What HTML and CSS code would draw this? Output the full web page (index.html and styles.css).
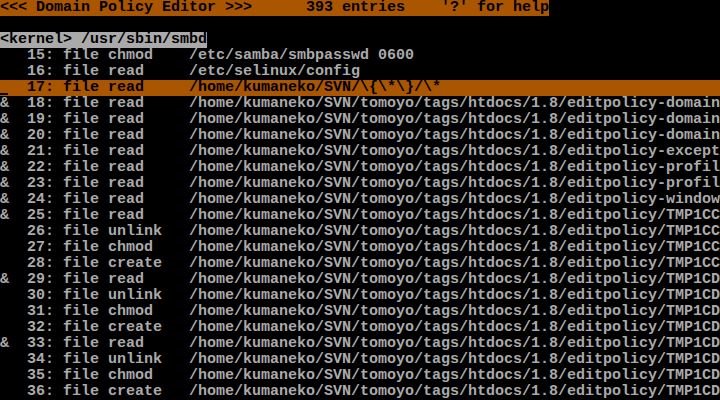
FILE: index.html
```html
<!DOCTYPE html>
<html>
<head>
<meta charset="utf-8">
<link rel="stylesheet" href="styles.css">
</head>
<body>
<div class="screen">
<div class="row"><span class="title">&lt;&lt;&lt; Domain Policy Editor &gt;&gt;&gt;      393 entries    '?' for help</span></div>
<div class="row"> </div>
<div class="row"><span class="domain">&lt;kernel&gt; /usr/sbin/smbd</span></div>
<div class="row">   15: file chmod    /etc/samba/smbpasswd 0600</div>
<div class="row">   16: file read     /etc/selinux/config</div>
<div class="row current"><span class="cursor"> </span>  17: file read     /home/kumaneko/SVN/\{\*\}/\*</div>
<div class="row">&amp;  18: file read     /home/kumaneko/SVN/tomoyo/tags/htdocs/1.8/editpolicy-domain</div>
<div class="row">&amp;  19: file read     /home/kumaneko/SVN/tomoyo/tags/htdocs/1.8/editpolicy-domain</div>
<div class="row">&amp;  20: file read     /home/kumaneko/SVN/tomoyo/tags/htdocs/1.8/editpolicy-domain</div>
<div class="row">&amp;  21: file read     /home/kumaneko/SVN/tomoyo/tags/htdocs/1.8/editpolicy-except</div>
<div class="row">&amp;  22: file read     /home/kumaneko/SVN/tomoyo/tags/htdocs/1.8/editpolicy-profil</div>
<div class="row">&amp;  23: file read     /home/kumaneko/SVN/tomoyo/tags/htdocs/1.8/editpolicy-profil</div>
<div class="row">&amp;  24: file read     /home/kumaneko/SVN/tomoyo/tags/htdocs/1.8/editpolicy-window</div>
<div class="row">&amp;  25: file read     /home/kumaneko/SVN/tomoyo/tags/htdocs/1.8/editpolicy/TMP1CC</div>
<div class="row">   26: file unlink   /home/kumaneko/SVN/tomoyo/tags/htdocs/1.8/editpolicy/TMP1CC</div>
<div class="row">   27: file chmod    /home/kumaneko/SVN/tomoyo/tags/htdocs/1.8/editpolicy/TMP1CC</div>
<div class="row">   28: file create   /home/kumaneko/SVN/tomoyo/tags/htdocs/1.8/editpolicy/TMP1CC</div>
<div class="row">&amp;  29: file read     /home/kumaneko/SVN/tomoyo/tags/htdocs/1.8/editpolicy/TMP1CD</div>
<div class="row">   30: file unlink   /home/kumaneko/SVN/tomoyo/tags/htdocs/1.8/editpolicy/TMP1CD</div>
<div class="row">   31: file chmod    /home/kumaneko/SVN/tomoyo/tags/htdocs/1.8/editpolicy/TMP1CD</div>
<div class="row">   32: file create   /home/kumaneko/SVN/tomoyo/tags/htdocs/1.8/editpolicy/TMP1CD</div>
<div class="row">&amp;  33: file read     /home/kumaneko/SVN/tomoyo/tags/htdocs/1.8/editpolicy/TMP1CD</div>
<div class="row">   34: file unlink   /home/kumaneko/SVN/tomoyo/tags/htdocs/1.8/editpolicy/TMP1CD</div>
<div class="row">   35: file chmod    /home/kumaneko/SVN/tomoyo/tags/htdocs/1.8/editpolicy/TMP1CD</div>
<div class="row">   36: file create   /home/kumaneko/SVN/tomoyo/tags/htdocs/1.8/editpolicy/TMP1CD</div>
</div>
</body>
</html>
```
FILE: styles.css
```css
html, body {
  margin: 0;
  padding: 0;
  background: #000;
}
.screen {
  width: 720px;
  height: 400px;
  overflow: hidden;
  background: #000;
  color: #aaaaaa;
  font-family: "Liberation Mono", "DejaVu Sans Mono", monospace;
  font-size: 15px;
  font-weight: bold;
  display: flex;
  flex-direction: column;
}
.row {
  height: 16px;
  line-height: 16px;
  white-space: pre;
  overflow: hidden;
}
.title {
  background: #aa5500;
  color: #000;
}
.domain {
  background: #aaaaaa;
  color: #000;
}
.current {
  background: #aa5500;
  color: #000;
}
.cursor {
  display: inline-block;
  width: 9px;
  height: 16px;
  vertical-align: top;
  background: linear-gradient(to bottom, transparent 13px, #000 13px, #000 15px, transparent 15px) no-repeat 0 0 / 8px 16px;
}
```
